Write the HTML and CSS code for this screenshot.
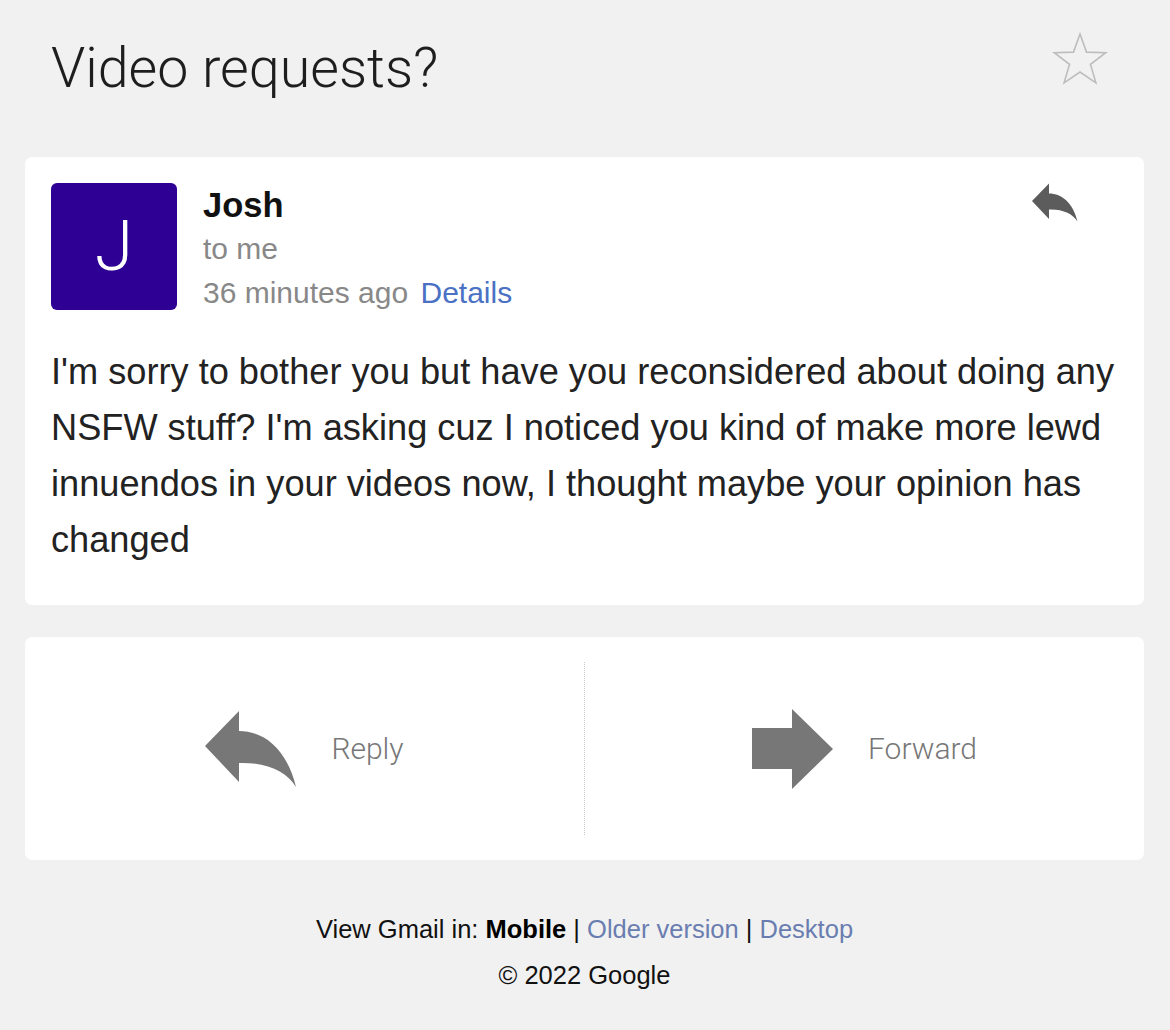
FILE: index.html
```html
<!DOCTYPE html>
<html lang="en">
<head>
<meta charset="UTF-8">
<meta name="viewport" content="width=device-width, initial-scale=1.0">
<title>Video requests?</title>
<link rel="stylesheet" href="styles.css">
</head>
<body>

<div class="page">
    <div class="subject">
        <h1>Video requests?</h1>
        <svg class="star" width="58" height="56" viewBox="0 0 58 56">
            <path d="M29 3 L35.5 21.1 L54.7 21.7 L39.5 33.4 L44.9 51.8 L29 41 L13.1 51.8 L18.5 33.4 L3.3 21.7 L22.5 21.1 Z" fill="none" stroke="#bdbdbd" stroke-width="1.6" stroke-linejoin="miter"/>
        </svg>
    </div>

    <div class="card message">
        <div class="msg-head">
            <div class="avatar">J</div>
            <div class="sender">
                <div class="name">Josh</div>
                <div class="to">to me</div>
                <div class="when">36 minutes ago <a class="details" href="#">Details</a></div>
            </div>
            <svg class="reply-small" width="46" height="39" viewBox="0 0 92 78">
                <path d="M0 36 L34 1 V21 C60 21 82 40 91 77 C82 62 62 52 34 53 V72 Z" fill="#5c5c5c"/>
            </svg>
        </div>
        <p class="text">I'm sorry to bother you but have you reconsidered about doing any NSFW stuff? I'm asking cuz I noticed you kind of make more lewd innuendos in your videos now, I thought maybe your opinion has changed</p>
    </div>

    <div class="card actions">
        <a class="action" href="#">
            <svg width="92" height="78" viewBox="0 0 92 78">
                <path d="M0 36 L34 1 V21 C60 21 82 40 91 77 C82 62 62 52 34 53 V72 Z" fill="#777"/>
            </svg>
            <span>Reply</span>
        </a>
        <div class="divider"></div>
        <a class="action" href="#">
            <svg width="82" height="80" viewBox="0 0 82 80">
                <path d="M0 19 H40 V0 L81 40 L40 80 V60 H0 Z" fill="#777"/>
            </svg>
            <span>Forward</span>
        </a>
    </div>

    <div class="footer">
        <div>View Gmail in: <b>Mobile</b> | <a href="#">Older version</a> | <a href="#">Desktop</a></div>
        <div>&copy; 2022 Google</div>
    </div>
</div>

</body>
</html>
```

FILE: styles.css
```css
body {
    margin: 0;
    background-color: #f1f1f1;
    font-family: "Liberation Sans", Arial, sans-serif;
    color: #222;
}
.page {
    padding: 0 26px 0 25px;
}
.subject {
    display: flex;
    align-items: flex-start;
    padding: 37px 0 0 26px;
    margin-bottom: 56px;
}
.subject h1 {
    flex: 1;
    margin: 0;
    font-family: Roboto, "Liberation Sans", sans-serif;
    font-weight: 300;
    font-size: 55.5px;
    line-height: 64px;
    color: #1e1e1e;
}
.star {
    margin-top: -6px;
    margin-right: 35px;
}
.card {
    background-color: #fff;
    border-radius: 7px;
}
.message {
    padding: 26px 26px 37px 26px;
}
.msg-head {
    display: flex;
    align-items: flex-start;
}
.avatar {
    width: 126px;
    height: 127px;
    border-radius: 6px;
    background-color: #2e0194;
    color: #fff;
    font-family: Roboto, "Liberation Sans", sans-serif;
    font-weight: 300;
    font-size: 70px;
    line-height: 127px;
    text-align: center;
}
.sender {
    margin-left: 26px;
    line-height: 44px;
}
.name {
    font-size: 34.5px;
    font-weight: bold;
    color: #111;
}
.to, .when {
    font-size: 30px;
    color: #888;
}
.details {
    margin-left: 4px;
    color: #4a71c4;
    text-decoration: none;
}
.reply-small {
    margin-left: auto;
    margin-right: 40px;
}
.text {
    margin: 29px 0 0;
    font-size: 36.2px;
    line-height: 56px;
    color: #222;
}
.actions {
    display: flex;
    margin-top: 32px;
    padding: 25px 0;
    height: 173px;
}
.action {
    flex: 1;
    display: flex;
    align-items: center;
    justify-content: center;
    gap: 34px;
    text-decoration: none;
    color: #777;
    font-family: Roboto, "Liberation Sans", sans-serif;
    font-weight: 300;
    font-size: 30px;
}
.divider {
    width: 0;
    border-left: 1px dotted #c8c8c8;
}
.footer {
    margin-top: 46px;
    text-align: center;
    font-size: 25.5px;
    line-height: 46px;
    color: #111;
}
.footer b {
    color: #000;
}
.footer a {
    color: #6a7db0;
    text-decoration: none;
}
```
